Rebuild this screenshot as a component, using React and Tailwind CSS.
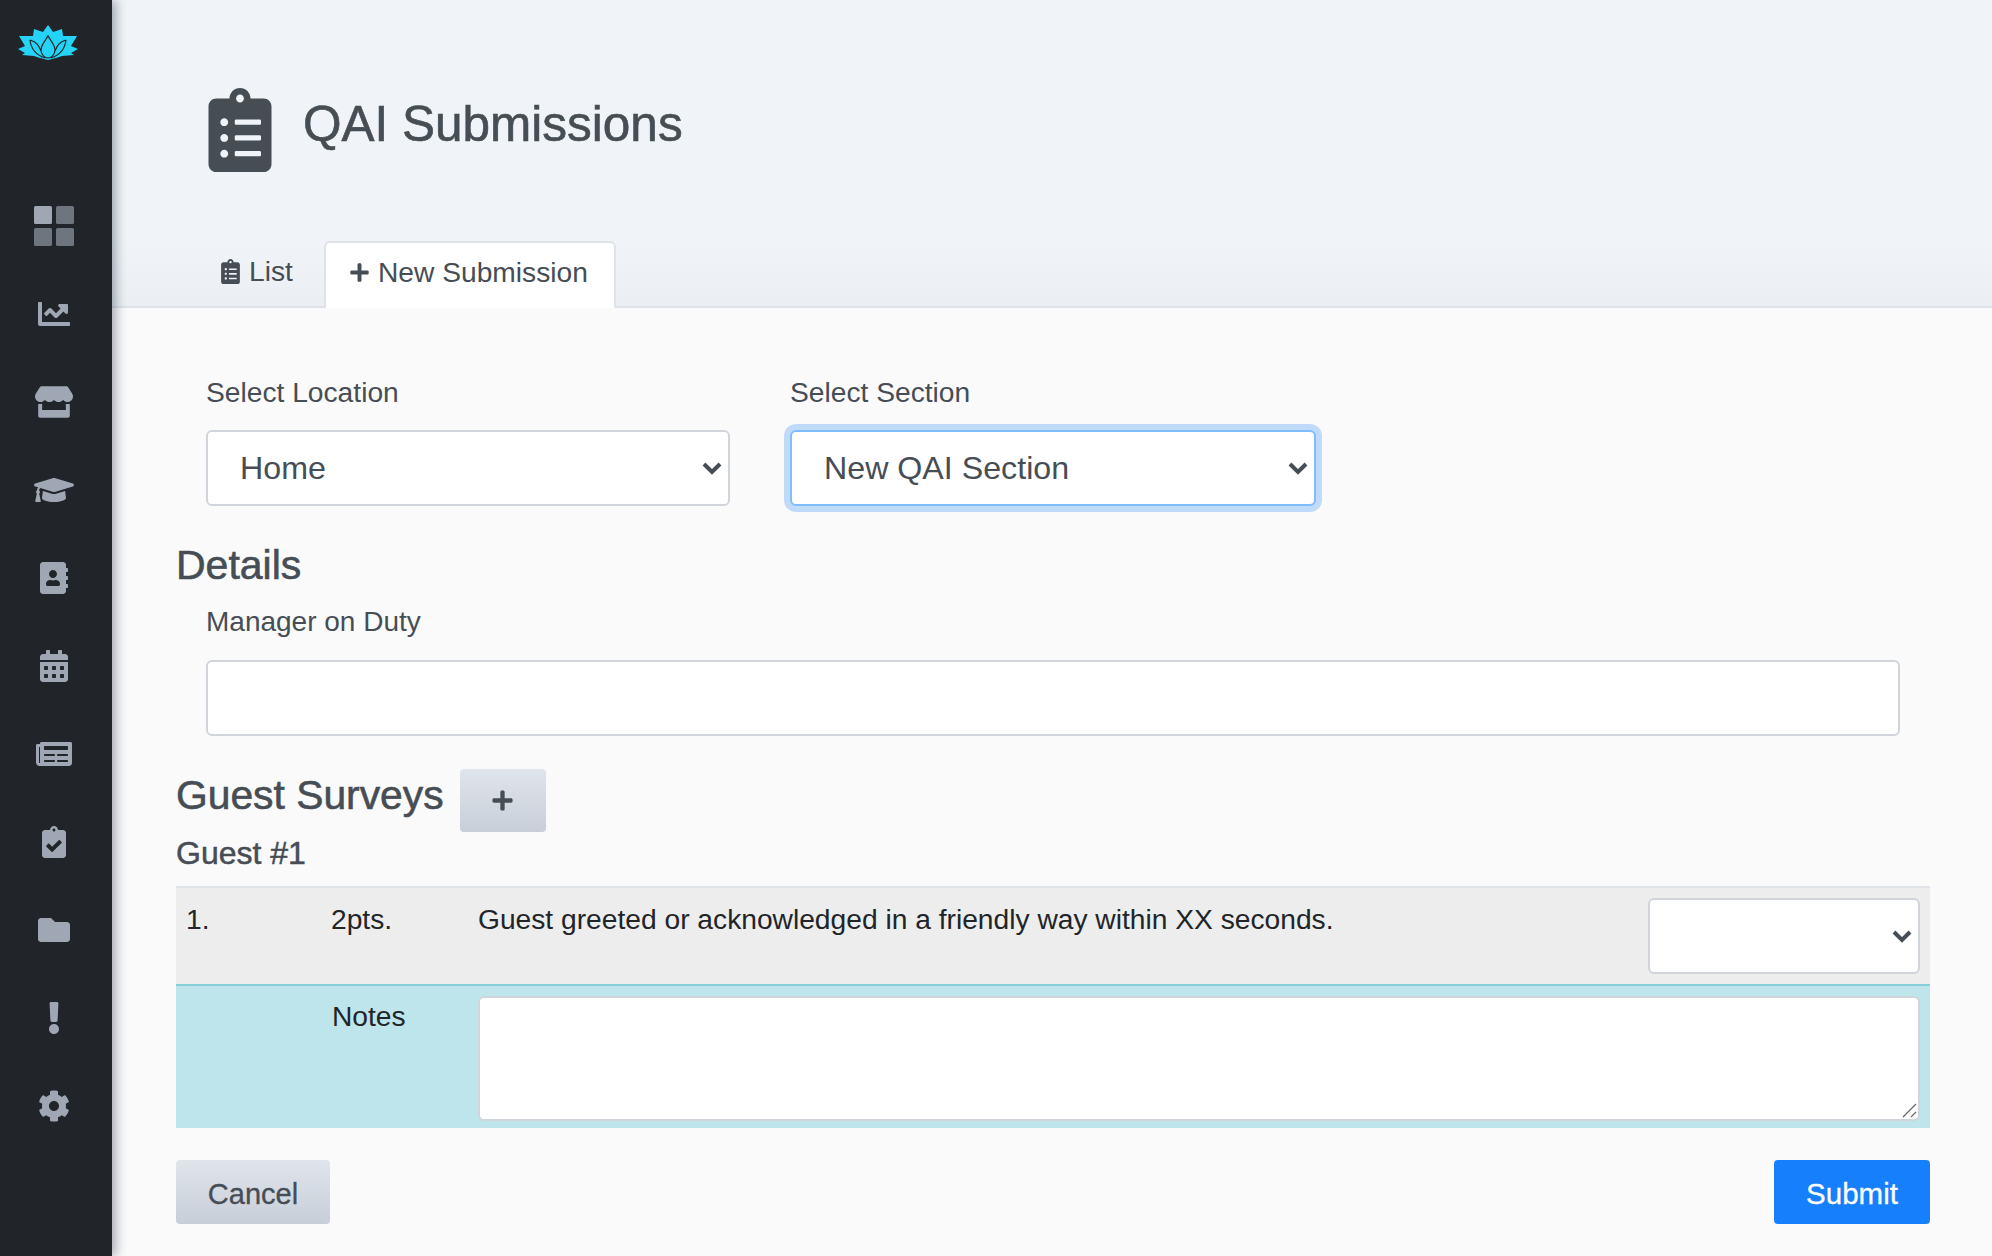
import React from "react";
import {
  FaChartLine, FaStore, FaGraduationCap, FaAddressBook, FaCalendarAlt, FaNewspaper,
  FaClipboardCheck, FaFolder, FaExclamation, FaCog, FaClipboardList, FaPlus,
} from "react-icons/fa";

function Lotus() {
  return (
    <svg viewBox="0 0 60 36" className="w-[60px] h-[36px]">
      <path fill="#25d3f6" d="M30 0L35 7L44 4L45 11L59 11L53 21L60 24L53 28L56 30L44 31L38 33L30 35L22 33L16 31L4 30L7 28L0 24L7 21L1 11L15 11L16 4L25 7Z" />
      <path fill="none" stroke="#212429" strokeWidth="1.2" d="M12 15C13 24 18 30 27 33M48 15C47 24 42 30 33 33M12 15C19 17 21 21 23 26M48 15C41 17 39 21 37 26" />
      <path fill="#25d3f6" stroke="#212429" strokeWidth="1.2" d="M30 11C33 16 37 20 37 25C37 30 33 33 30 33C27 33 23 30 23 25C23 20 27 16 30 11Z" />
    </svg>
  );
}

function Dash() {
  return (
    <svg viewBox="0 0 40 40" className="w-[40px] h-[40px]">
      <rect x="0" y="0" width="18" height="18" rx="1.5" fill="#a0a7b4" />
      <rect x="22" y="0" width="18" height="18" rx="1.5" fill="#6f757e" />
      <rect x="0" y="22" width="18" height="18" rx="1.5" fill="#6f757e" />
      <rect x="22" y="22" width="18" height="18" rx="1.5" fill="#6f757e" />
    </svg>
  );
}

function Chevron() {
  return (
    <svg viewBox="0 0 20 14" className="w-[20px] h-[14px]" fill="none" stroke="#464d55" strokeWidth="4">
      <path d="M2 3l8 8 8-8" />
    </svg>
  );
}

function Select({ value, wrap, ring }) {
  return (
    <div className={`relative ${wrap}`}>
      <select
        defaultValue={value}
        className={`appearance-none w-full h-full bg-white rounded-[6px] pl-[32px] pr-10 text-[32.2px] text-[#464d55] outline-none ${ring ? "border-2 border-[#80bdff] shadow-[0_0_0_6px_#bfdbf9]" : "border-2 border-[#d0d5dc]"}`}
      >
        <option value={value}>{value}</option>
      </select>
      <div className="absolute right-[8px] top-1/2 -translate-y-1/2 pointer-events-none">
        <Chevron />
      </div>
    </div>
  );
}

const heading = "text-[#464d55] [-webkit-text-stroke:0.6px_#464d55]";
const grayBtn = "bg-gradient-to-b from-[#e0e5ec] to-[#c8ced8] rounded-[4px] text-[#464d55]";

export default function App() {
  const icons = [
    [FaChartLine, 32], [FaStore, 38], [FaGraduationCap, 40], [FaAddressBook, 32], [FaCalendarAlt, 32],
    [FaNewspaper, 36], [FaClipboardCheck, 32], [FaFolder, 32], [FaExclamation, 32], [FaCog, 32],
  ];
  return (
    <div className="flex h-[1256px] w-[1992px] overflow-hidden bg-[#fafafa] font-['Liberation_Sans',Arial,sans-serif]">
      <aside className="w-[112px] shrink-0 bg-[#212429] shadow-[4px_0_10px_rgba(40,50,70,0.4)] z-10 flex flex-col">
        <div className="pl-[18px] pt-[25px] h-[182px]">
          <Lotus />
        </div>
        <div className="flex flex-col items-center pr-[4px]">
          <div className="h-[88px] flex items-center justify-center"><Dash /></div>
          {icons.map(([I, s], i) => (
            <div key={i} className="h-[88px] flex items-center justify-center">
              <I size={s} color="#a0a7b4" />
            </div>
          ))}
        </div>
      </aside>

      <main className="flex-1 min-w-0">
        <header className="h-[308px] bg-gradient-to-b from-[#f0f4f9] from-80% to-[#ebeff4] border-b-2 border-[#dfe3e8] flex flex-col">
          <div className="shrink-0 flex items-center h-[240px] pl-[96px] pt-[20px]">
            <FaClipboardList size={84} color="#464d55" className="w-[64px]" />
            <h1 className={`ml-[31px] text-[49.5px] leading-none -mt-[12px] ${heading}`}>QAI Submissions</h1>
          </div>
          <div className="shrink-0 flex items-end h-[68px] pl-[96px]">
            <div className="w-[116px] h-[67px] pb-[7px] flex items-center pl-[10px] gap-[6px] text-[28.2px] text-[#464d55]">
              <FaClipboardList size={25} />
              <span>List</span>
            </div>
            <div className="w-[292px] h-[67px] pb-[7px] bg-white border-2 border-b-0 border-[#dfe3e8] rounded-t-[6px] flex items-center pl-[23px] gap-[8px] text-[28.2px] text-[#464d55]">
              <FaPlus size={21} />
              <span>New Submission</span>
            </div>
          </div>
        </header>

        <section className="pl-[64px] pr-[62px]">
          <div className="flex gap-[60px] pl-[30px] pt-[66px]">
            <div className="w-[524px]">
              <div className="text-[28.2px] leading-[36px] text-[#464d55] mb-[20px]">Select Location</div>
              <Select value="Home" wrap="h-[76px]" />
            </div>
            <div className="w-[526px]">
              <div className="text-[28.2px] leading-[36px] text-[#464d55] mb-[20px]">Select Section</div>
              <Select value="New QAI Section" wrap="h-[76px]" ring />
            </div>
          </div>

          <h2 className={`text-[41px] leading-[46px] mt-[36px] ${heading}`}>Details</h2>
          <div className="pl-[30px] pr-[30px] mt-[16px]">
            <div className="text-[28px] leading-[36px] text-[#464d55] mb-[20px]">Manager on Duty</div>
            <input className="block w-full h-[76px] bg-white border-2 border-[#d0d5dc] rounded-[6px] outline-none" />
          </div>

          <div className="flex items-start mt-[33px]">
            <h2 className={`text-[40.8px] leading-[46px] mt-[3px] ${heading}`}>Guest Surveys</h2>
            <button className={`ml-[16px] w-[86px] h-[63px] flex items-center justify-center ${grayBtn}`}>
              <FaPlus size={23} color="#464d55" />
            </button>
          </div>
          <h3 className="text-[32px] leading-[38px] mt-[2px] text-[#464d55] [-webkit-text-stroke:0.5px_#464d55]">Guest #1</h3>

          <div className="mt-[14px]">
            <div className="h-[98px] bg-[#ededed] border-t-2 border-[#dfe3e8] flex text-[28.2px] text-[#212529]">
              <div className="w-[145px] pl-[10px] pt-[13px] leading-[36px]">1.</div>
              <div className="w-[146px] pl-[10px] pt-[13px] leading-[36px]">2pts.</div>
              <div className="flex-1 pl-[11px] pt-[13px] leading-[36px]">Guest greeted or acknowledged in a friendly way within XX seconds.</div>
              <div className="pr-[10px] pt-[10px]">
                <Select value="" wrap="w-[272px] h-[76px]" />
              </div>
            </div>
            <div className="h-[144px] bg-[#bee5eb] border-t-2 border-[#86cfda] flex text-[28.2px] text-[#212529]">
              <div className="w-[145px]" />
              <div className="w-[157px] pl-[11px] pt-[12px] leading-[36px]">Notes</div>
              <div className="flex-1 pr-[10px] pt-[10px]">
                <div className="relative">
                  <textarea className="block w-full h-[125px] bg-white border-2 border-[#d0d5dc] rounded-[6px] outline-none resize-none" />
                  <svg viewBox="0 0 15 15" className="absolute right-[3px] bottom-[3px] w-[15px] h-[15px]" stroke="#666" strokeWidth="1.2">
                    <path d="M1 14L14 1M9 14L14 9" />
                  </svg>
                </div>
              </div>
            </div>
          </div>

          <div className="flex justify-between mt-[32px]">
            <button className={`w-[154px] h-[64px] pt-[5px] text-[29px] ${grayBtn} [-webkit-text-stroke:0.3px_#464d55]`}>Cancel</button>
            <button className="w-[156px] h-[64px] pt-[5px] text-[29.5px] text-white bg-[#167ffc] rounded-[4px] [-webkit-text-stroke:0.3px_#fff]">Submit</button>
          </div>
        </section>
      </main>
    </div>
  );
}
